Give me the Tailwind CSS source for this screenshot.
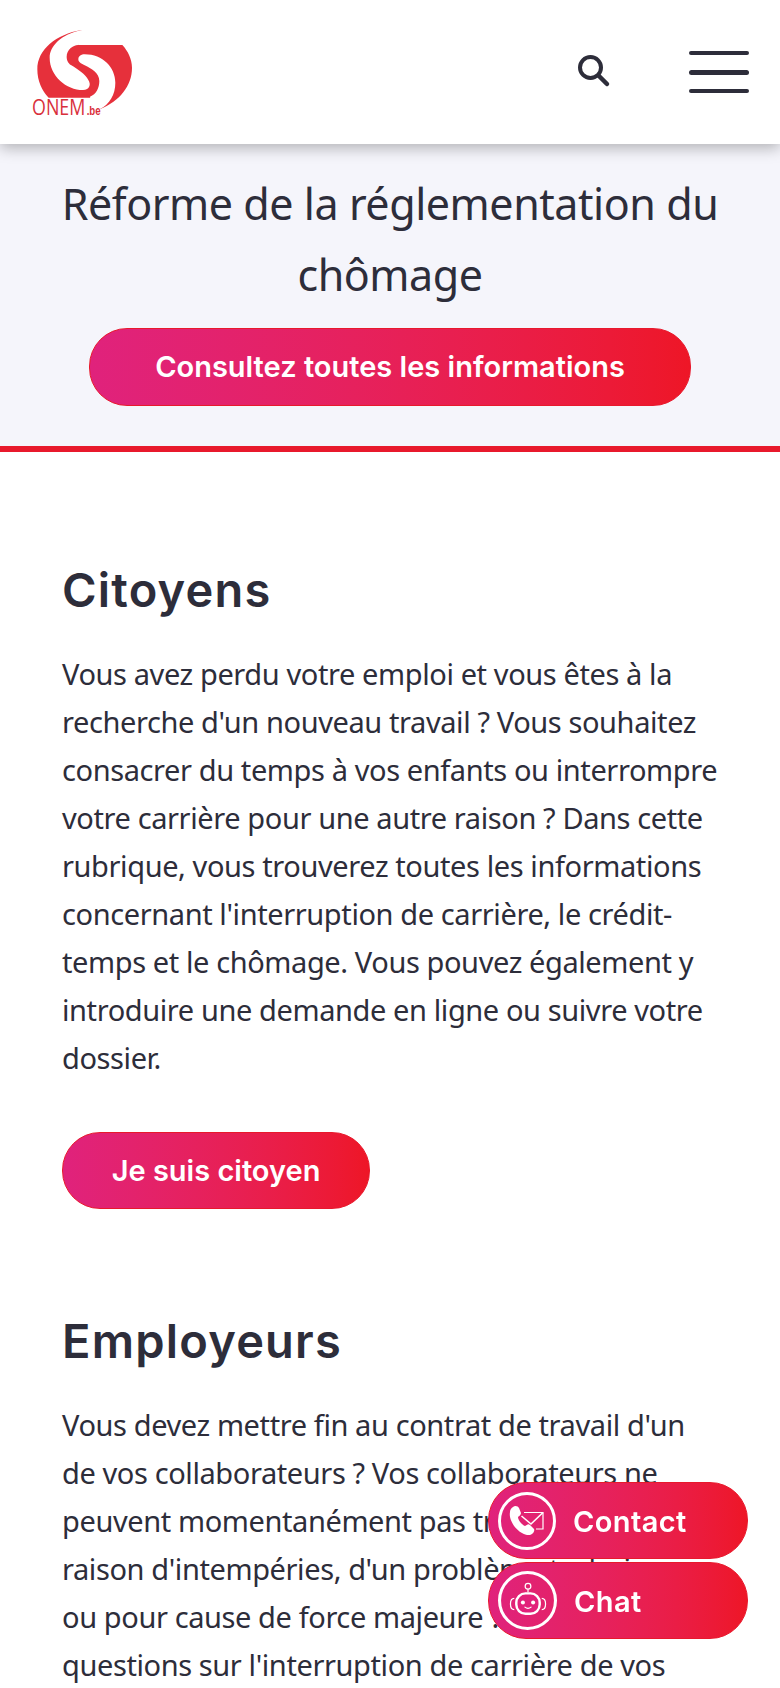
<!DOCTYPE html>
<html lang="fr">
<head>
    <meta charset="UTF-8">
    <meta name="viewport" content="width=device-width, initial-scale=1.0">
    <title>ONEM</title>
    <script src="https://cdn.jsdelivr.net/npm/@tailwindcss/browser@4"></script>
</head>
<body class="bg-white h-[1688px] overflow-hidden text-[#2d2d3a] font-['Noto_Sans',sans-serif]">
    <!-- header -->
    <header class="relative z-10 h-[144px] bg-white flex items-center justify-between pl-[28px] pr-[31px] shadow-[0_4px_14px_rgba(0,0,0,0.28)]">
        <svg width="110" height="96" viewBox="0 0 330 288" class="mt-[4px]">
            <path fill="#e6303b" d="M160 12C85 25 28 70 28 130C28 165 42 195 62 215L200 215L215 250C275 225 312 180 312 125C312 100 300 75 283 57L150 57Z"/>
            <path fill="#fff" d="M160 12C100 25 65 60 65 95C65 150 115 192 165 192C185 192 190 175 181 162C172 145 150 130 130 118C118 110 116 100 116 92C116 72 135 57 150 57L170 30Z"/>
            <path fill="#fff" d="M151 100C151 90 160 85 170 85C225 85 262 125 262 170C262 205 245 235 215 250L190 240L186 212C205 205 214 185 214 165C214 140 190 128 170 118C158 112 151 108 151 100Z"/>
            <rect x="10" y="216" width="175" height="60" fill="#fff"/>
            <text x="12" y="267" font-family="Open Sans" font-weight="400" font-size="68" fill="#d9303c" textLength="160" lengthAdjust="spacingAndGlyphs">ONEM</text>
            <text x="176" y="267" font-family="Liberation Sans" font-weight="700" font-size="38" fill="#d9303c" textLength="42" lengthAdjust="spacingAndGlyphs">.be</text>
        </svg>
        <div class="flex items-center gap-[77px]">
            <svg width="36" height="36" viewBox="0 0 36 36" fill="none" stroke="#2d2d3a" class="mt-[-2px]">
                <circle cx="14.5" cy="14.5" r="10.5" stroke-width="4"/>
                <path d="M22.5 22.5L31 31" stroke-width="4.5" stroke-linecap="round"/>
            </svg>
            <div class="w-[60px] h-[42px] flex flex-col justify-between items-stretch">
                <span class="h-[4px] rounded-full bg-[#2d2d3a]"></span>
                <span class="h-[5px] rounded-full bg-[#2d2d3a]"></span>
                <span class="h-[4px] rounded-full bg-[#2d2d3a]"></span>
            </div>
        </div>
    </header>

    <!-- banner -->
    <section class="bg-[#f5f5fb] border-b-[6px] border-[#e8192c] pt-[24px] pb-[40px] flex flex-col items-center">
        <h2 class="text-[43px] leading-[71px] text-center tracking-[-0.45px]">Réforme de la réglementation du<br>chômage</h2>
        <a href="#" class="mt-[18px] w-[602px] h-[78px] rounded-[38px] border border-[#e8192c] bg-linear-to-r from-[#e0227c] to-[#ee1626] text-white flex items-center justify-center font-['Inter',sans-serif] font-semibold text-[29px]">Consultez toutes les informations</a>
    </section>

    <main class="px-[62px]">
        <section class="pt-[108px]">
            <h2 class="font-['Inter',sans-serif] font-semibold text-[47px] leading-[60px] tracking-[1.2px] mb-[30px]">Citoyens</h2>
            <p class="text-[29px] leading-[48px] tracking-[-0.4px] whitespace-nowrap">
                Vous avez perdu votre emploi et vous êtes à la<br>
                recherche d'un nouveau travail ? Vous souhaitez<br>
                consacrer du temps à vos enfants ou interrompre<br>
                votre carrière pour une autre raison ? Dans cette<br>
                rubrique, vous trouverez toutes les informations<br>
                concernant l'interruption de carrière, le crédit-<br>
                temps et le chômage. Vous pouvez également y<br>
                introduire une demande en ligne ou suivre votre<br>
                dossier.
            </p>
            <a href="#" class="mt-[50px] w-[308px] h-[77px] rounded-[38px] border border-[#e8192c] bg-linear-to-r from-[#e0227c] to-[#ee1626] text-white flex items-center justify-center font-['Inter',sans-serif] font-semibold text-[29px]">Je suis citoyen</a>
        </section>

        <section class="pt-[102px]">
            <h2 class="font-['Inter',sans-serif] font-semibold text-[47px] leading-[60px] tracking-[1.2px] mb-[30px]">Employeurs</h2>
            <p class="text-[29px] leading-[48px] tracking-[-0.4px] whitespace-nowrap">
                Vous devez mettre fin au contrat de travail d'un<br>
                de vos collaborateurs ? Vos collaborateurs ne<br>
                peuvent momentanément pas travailler en<br>
                raison d'intempéries, d'un problème technique<br>
                ou pour cause de force majeure ? Vous avez des<br>
                questions sur l'interruption de carrière de vos
            </p>
        </section>
    </main>

    <!-- floating buttons -->
    <div class="fixed right-[32px] bottom-[49px] z-20 flex flex-col gap-[3px]">
        <a href="#" class="w-[260px] h-[77px] rounded-[38px] border border-[#e8192c] bg-linear-to-r from-[#e0227c] to-[#ee1626] text-white flex items-center pl-[9px] gap-[17px] font-['Inter',sans-serif] font-semibold text-[29px] tracking-[0.4px]">
            <svg width="58" height="58" viewBox="0 0 58 58" class="shrink-0">
                <circle cx="29" cy="29" r="27.5" fill="none" stroke="#fff" stroke-width="3"/>
                <path fill="#fff" d="M15 15C17 13 20 14 21 16L23 21C23 23 21 24 20 25C20 28 24 33 27 34C29 33 30 31 32 33L36 37C37 39 35 42 32 43C22 44 10 30 12 20C12 18 13 16 15 15Z"/>
                <path fill="none" stroke="#fff" stroke-width="1.2" d="M26 20.5H45V37H38"/>
                <path fill="none" stroke="#fff" stroke-width="1.6" d="M23.5 24L33 32L45 20.5"/>
            </svg>
            <span class="pt-[3px]">Contact</span>
        </a>
        <a href="#" class="w-[260px] h-[77px] rounded-[38px] border border-[#e8192c] bg-linear-to-r from-[#e0227c] to-[#ee1626] text-white flex items-center pl-[9px] gap-[17px] font-['Inter',sans-serif] font-semibold text-[29px] tracking-[0.4px]">
            <svg width="59" height="59" viewBox="0 0 58 58" class="shrink-0">
                <circle cx="29" cy="29" r="27.5" fill="none" stroke="#fff" stroke-width="3"/>
                <circle cx="29.5" cy="15" r="2.8" fill="none" stroke="#fff" stroke-width="1.2"/>
                <path d="M29.5 18V21" stroke="#fff" stroke-width="1.2"/>
                <rect x="18" y="22" width="23" height="20" rx="9" fill="#e2207a" stroke="#fff" stroke-width="2.4"/>
                <path fill="none" stroke="#fff" stroke-width="1.2" d="M16 27C11 27 11 38 16 38M43 27C48 27 48 38 43 38"/>
                <circle cx="24.5" cy="31" r="2" fill="#fff"/>
                <circle cx="34.5" cy="31" r="2" fill="#fff"/>
                <path d="M26.5 35.5Q29.5 38 32.5 35.5" fill="none" stroke="#fff" stroke-width="1.2" stroke-linecap="round"/>
            </svg>
            <span class="pt-[3px]">Chat</span>
        </a>
    </div>
</body>
</html>
